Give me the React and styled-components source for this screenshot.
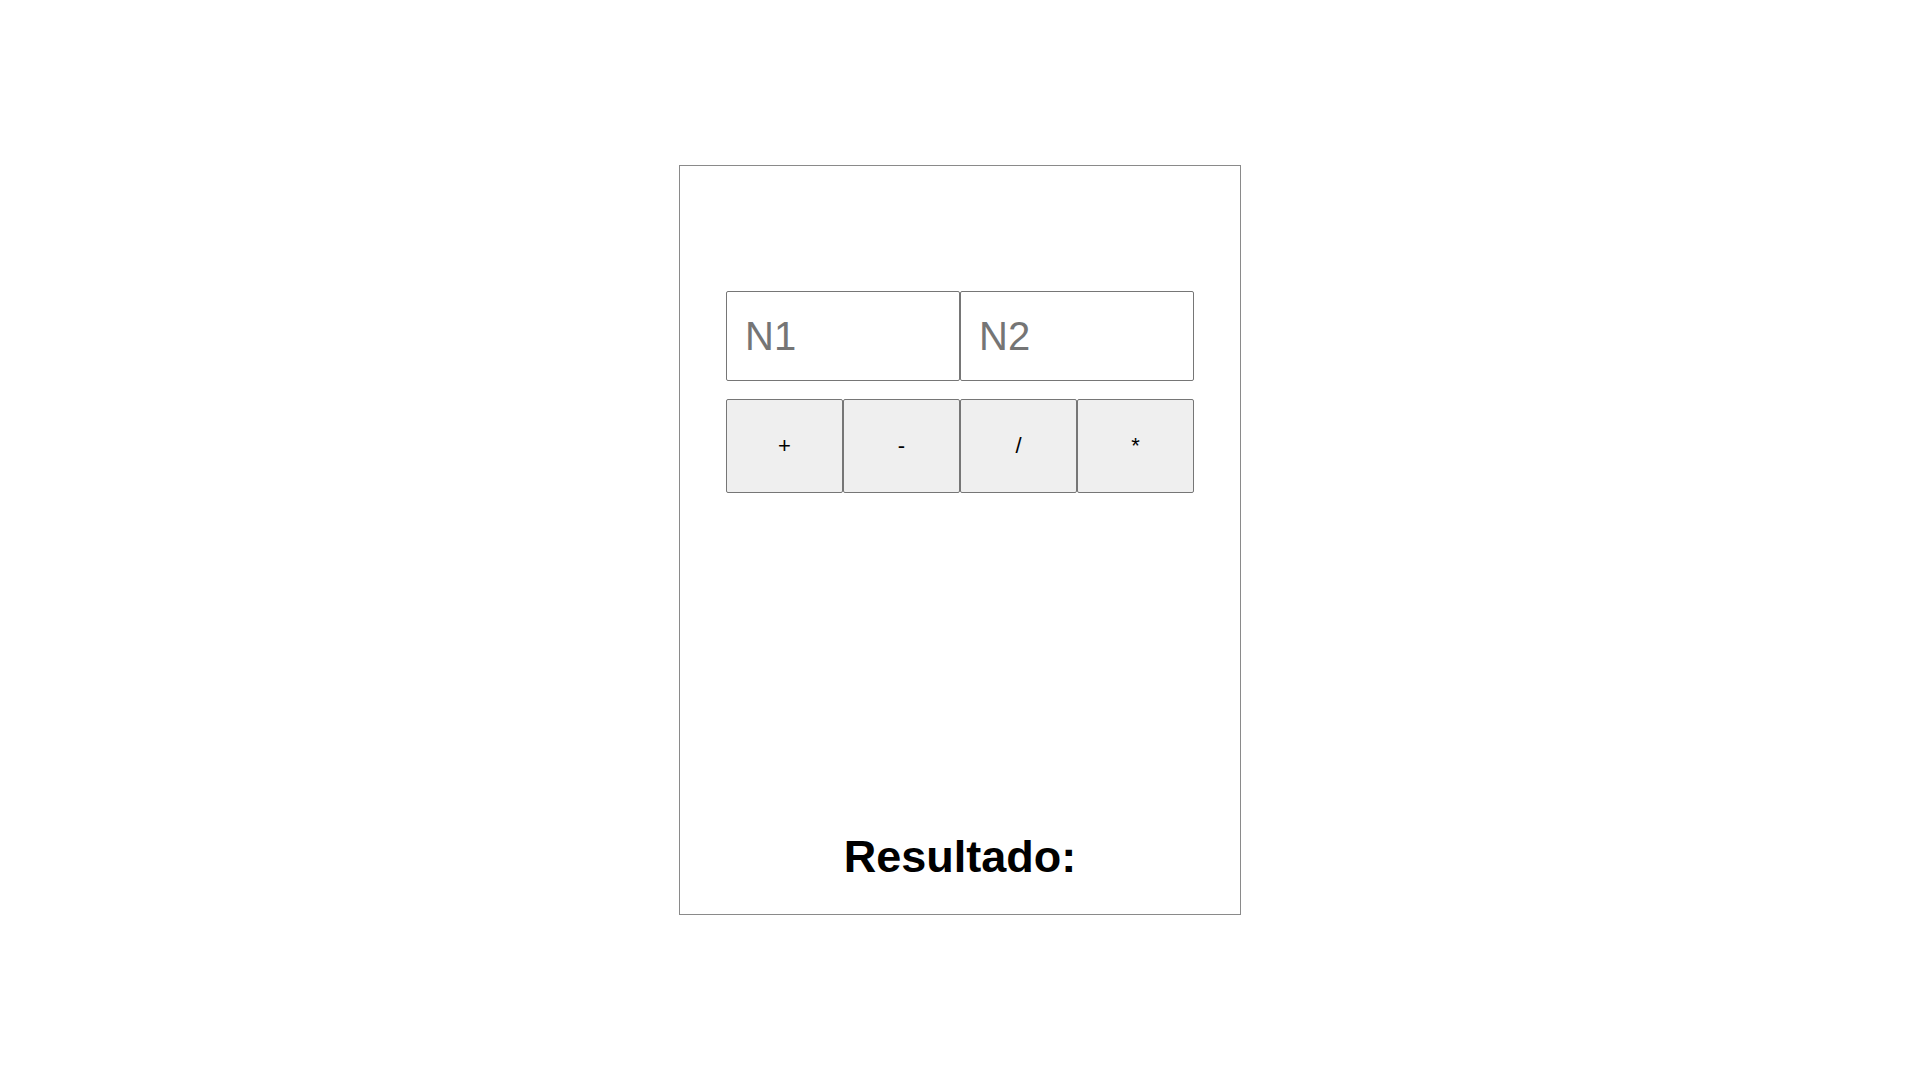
import React from "react";
import styled, { createGlobalStyle } from "styled-components";

const GlobalStyle = createGlobalStyle`
  html, body {
    margin: 0;
    padding: 0;
    background: #ffffff;
    font-family: "Liberation Sans", Arial, sans-serif;
  }
`;

const PageStyle = styled.div`
  display: flex;
  justify-content: center;
  align-items: center;
  width: 100%;
  min-height: 100vh;
`;

const CardStyle = styled.div`
  display: flex;
  flex-direction: column;
  align-items: center;
  box-sizing: border-box;
  width: 562px;
  height: 750px;
  padding: 125px 46px 31px;
  border: 1px solid #8a8a8a;
`;

const RowStyle = styled.div`
  display: flex;
  width: 468px;
  margin-bottom: ${(props) => props.$gap || 0}px;
`;

const NumberInput = styled.input`
  box-sizing: border-box;
  width: 234px;
  height: 90px;
  margin: 0;
  padding: 0 18px;
  border: 1px solid #767676;
  border-radius: 2px;
  background: #ffffff;
  font-family: "Liberation Sans", Arial, sans-serif;
  font-size: 40px;
  color: #000000;
  outline: none;

  &::placeholder {
    color: #757575;
  }
`;

const OpButton = styled.button`
  box-sizing: border-box;
  width: 117px;
  height: 94px;
  margin: 0;
  padding: 0;
  border: 1px solid #767676;
  border-radius: 2px;
  background: #efefef;
  font-family: "Liberation Sans", Arial, sans-serif;
  font-size: 22px;
  color: #000000;
  cursor: pointer;
`;

const ResultText = styled.h2`
  margin: auto 0 0;
  font-family: "Liberation Sans", Arial, sans-serif;
  font-size: 45px;
  line-height: 52px;
  font-weight: 700;
  color: #000000;
  text-align: center;
`;

const ops = ["+", "-", "/", "*"];

const App = () => {
  return (
    <PageStyle>
      <GlobalStyle />
      <CardStyle>
        <RowStyle $gap={18}>
          <NumberInput type="text" placeholder="N1" />
          <NumberInput type="text" placeholder="N2" />
        </RowStyle>
        <RowStyle>
          {ops.map((op) => (
            <OpButton key={op}>{op}</OpButton>
          ))}
        </RowStyle>
        <ResultText>Resultado:</ResultText>
      </CardStyle>
    </PageStyle>
  );
};

export default App;
